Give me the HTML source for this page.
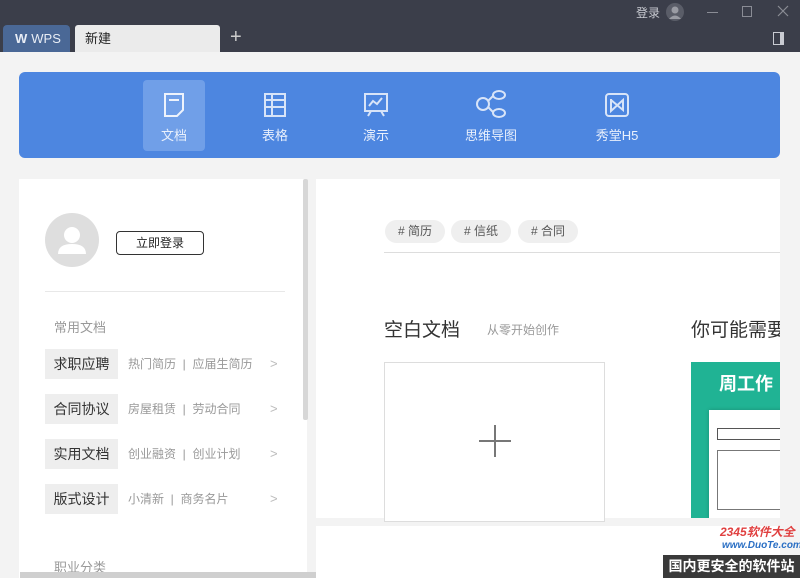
<!DOCTYPE html>
<html><head><meta charset="utf-8"><style>
*{margin:0;padding:0;box-sizing:border-box}
body{width:800px;height:578px;overflow:hidden;background:#f3f3f3;font-family:"Liberation Sans","Noto Sans CJK SC",sans-serif;position:relative}
.abs{position:absolute}
.top{left:0;top:0;width:800px;height:52px;background:#3b3e4a}
.tabw{left:3px;top:25px;width:67px;height:27px;background:#4a6896;border-radius:4px 4px 0 0;color:#e8edf5;font-size:13px;line-height:27px;padding-left:12px}
.tabn{left:75px;top:25px;width:145px;height:27px;background:#ebebeb;border-radius:3px 3px 0 0;font-size:13px;line-height:28px;padding-left:10px;color:#222}
.banner{left:19px;top:72px;width:761px;height:86px;background:#4d86e0;border-radius:6px}
.item{top:80px;width:62px;height:71px;color:#e9f0fc;font-size:13px;text-align:center}
.item svg{display:block;margin:12px auto 7px}
.left{left:19px;top:179px;width:288px;height:399px;background:#fff}
.right{left:316px;top:179px;width:464px;height:339px;background:#fff}
.cat{left:45px;width:73px;height:30px;background:#eeeeee;font-size:14px;color:#333;line-height:30px;text-align:center}
.sub{left:128px;font-size:12px;color:#999;line-height:30px}
.arr{left:270px;font-size:13px;color:#bbb;line-height:30px}
.tag{top:220px;height:23px;background:#efefef;border-radius:12px;font-size:12px;color:#555;line-height:23px;text-align:center}
</style></head><body>
<div class="abs top"></div>
<div class="abs" style="left:636px;top:4px;color:#c9cbd2;font-size:12px">登录</div>
<svg class="abs" style="left:665px;top:2px" width="20" height="20"><circle cx="10" cy="10" r="9" fill="#5a5d68"/><circle cx="10" cy="8" r="3.5" fill="#9a9ca4"/><path d="M4 17 Q10 10 16 17" fill="#9a9ca4"/></svg>
<div class="abs" style="left:707px;top:12px;width:11px;height:1px;background:#8a8c95"></div>
<div class="abs" style="left:742px;top:6px;width:10px;height:11px;border:1px solid #8a8c95"></div>
<svg class="abs" style="left:777px;top:5px" width="12" height="12"><path d="M1 1L11 11M11 1L1 11" stroke="#8a8c95" stroke-width="1.2"/></svg>
<div class="abs tabw"><b style="font-weight:bold;margin-right:4px">W</b>WPS</div>
<div class="abs tabn">新建</div>
<div class="abs" style="left:230px;top:26px;color:#ccc;font-size:20px">+</div>
<div class="abs" style="left:773px;top:32px;width:11px;height:13px;border:1px solid #c9cbd2;border-right:4px solid #c9cbd2"></div>

<div class="abs banner"></div>
<div class="abs" style="left:143px;top:80px;width:62px;height:71px;background:#709fe8;border-radius:4px"></div>
<div class="abs item" style="left:143px"><svg width="24" height="26"><path d="M3 2H21V18L15 24H3Z" fill="none" stroke="#eef3fc" stroke-width="2"/><path d="M7 8H17" stroke="#eef3fc" stroke-width="2"/></svg>文档</div>
<div class="abs item" style="left:244px"><svg width="24" height="26"><rect x="2" y="2" width="20" height="22" fill="none" stroke="#d8e4f8" stroke-width="2"/><path d="M2 8H22M2 15H22M9 2V24" stroke="#d8e4f8" stroke-width="2"/></svg>表格</div>
<div class="abs item" style="left:345px"><svg width="26" height="26"><rect x="2" y="2" width="22" height="17" fill="none" stroke="#d8e4f8" stroke-width="2"/><path d="M6 14L10 9L14 12L19 6M8 19L5 24M18 19L21 24" stroke="#d8e4f8" stroke-width="2" fill="none"/></svg>演示</div>
<div class="abs item" style="left:460px;width:62px"><svg width="32" height="28" style="margin-top:10px;margin-bottom:7px"><circle cx="8" cy="14" r="6" fill="none" stroke="#d8e4f8" stroke-width="2"/><ellipse cx="24" cy="5" rx="6" ry="4" fill="none" stroke="#d8e4f8" stroke-width="2"/><ellipse cx="24" cy="23" rx="6" ry="4" fill="none" stroke="#d8e4f8" stroke-width="2"/><path d="M13 11L18 6M13 17L18 22" stroke="#d8e4f8" stroke-width="2"/></svg>思维导图</div>
<div class="abs item" style="left:586px"><svg width="26" height="26"><rect x="2" y="2" width="22" height="22" rx="3" fill="none" stroke="#d8e4f8" stroke-width="2"/><path d="M7 7V19L19 8V18L7 8" stroke="#d8e4f8" stroke-width="2" fill="none"/></svg>秀堂H5</div>

<div class="abs left"></div>
<div class="abs" style="left:303px;top:179px;width:5px;height:241px;background:#d7d7d7;border-radius:2px"></div>
<svg class="abs" style="left:45px;top:213px" width="54" height="54"><circle cx="27" cy="27" r="27" fill="#dedede"/><circle cx="27" cy="22" r="8" fill="#fff"/><path d="M13 41Q13 31 27 31Q41 31 41 41Z" fill="#fff"/></svg>
<div class="abs" style="left:116px;top:231px;width:88px;height:24px;border:1px solid #333;border-radius:4px;font-size:12px;text-align:center;line-height:22px;color:#222">立即登录</div>
<div class="abs" style="left:45px;top:291px;width:240px;height:1px;background:#e8e8e8"></div>
<div class="abs" style="left:54px;top:317px;font-size:13px;color:#999">常用文档</div>
<div class="abs cat" style="top:349px">求职应聘</div><div class="abs sub" style="top:349px">热门简历 &nbsp;|&nbsp; 应届生简历</div><div class="abs arr" style="top:349px">&gt;</div>
<div class="abs cat" style="top:394px">合同协议</div><div class="abs sub" style="top:394px">房屋租赁 &nbsp;|&nbsp; 劳动合同</div><div class="abs arr" style="top:394px">&gt;</div>
<div class="abs cat" style="top:439px">实用文档</div><div class="abs sub" style="top:439px">创业融资 &nbsp;|&nbsp; 创业计划</div><div class="abs arr" style="top:439px">&gt;</div>
<div class="abs cat" style="top:484px">版式设计</div><div class="abs sub" style="top:484px">小清新 &nbsp;|&nbsp; 商务名片</div><div class="abs arr" style="top:484px">&gt;</div>
<div class="abs" style="left:54px;top:557px;font-size:13px;color:#999">职业分类</div>
<div class="abs" style="left:20px;top:572px;width:447px;height:6px;background:#cfcfcf"></div>

<div class="abs right"></div>
<div class="abs" style="left:316px;top:526px;width:464px;height:52px;background:#fff"></div>
<div class="abs tag" style="left:385px;width:60px"># 简历</div>
<div class="abs tag" style="left:451px;width:60px"># 信纸</div>
<div class="abs tag" style="left:518px;width:60px"># 合同</div>
<div class="abs" style="left:384px;top:252px;width:396px;height:1px;background:#ddd"></div>
<div class="abs" style="left:384px;top:315px;font-size:19px;color:#333">空白文档</div>
<div class="abs" style="left:487px;top:321px;font-size:12px;color:#999">从零开始创作</div>
<div class="abs" style="left:691px;top:315px;font-size:19px;color:#333;white-space:nowrap;width:89px;overflow:hidden">你可能需要</div>
<div class="abs" style="left:384px;top:362px;width:221px;height:160px;border:1px solid #ddd;background:#fff"></div>
<div class="abs" style="left:479px;top:440px;width:32px;height:1.5px;background:#777"></div>
<div class="abs" style="left:494px;top:425px;width:1.5px;height:32px;background:#777"></div>
<div class="abs" style="left:691px;top:362px;width:89px;height:156px;background:#20b394;overflow:hidden">
<div class="abs" style="left:28px;top:8px;color:#fff;font-size:18px;font-weight:bold;white-space:nowrap">周工作</div>
<div class="abs" style="left:18px;top:48px;width:80px;height:110px;background:#fff;box-shadow:0 0 4px rgba(0,0,0,.2)">
<div style="margin:18px 0 0 8px;height:12px;border:1px solid #555"></div>
<div style="margin:10px 0 0 8px;height:60px;border:1px solid #777;border-right:none"></div>
</div></div>
<div class="abs" style="left:720px;top:523px;font-size:12px;color:#e04040;font-weight:bold;font-style:italic">2345软件大全</div>
<div class="abs" style="left:722px;top:540px;font-size:10px;color:#2a6fc4;font-style:italic;font-weight:bold">www.DuoTe.com</div>
<div class="abs" style="left:663px;top:555px;width:137px;height:23px;background:#3a3a3a;color:#fff;font-size:14px;font-weight:bold;line-height:23px;text-align:center">国内更安全的软件站</div>
</body></html>
